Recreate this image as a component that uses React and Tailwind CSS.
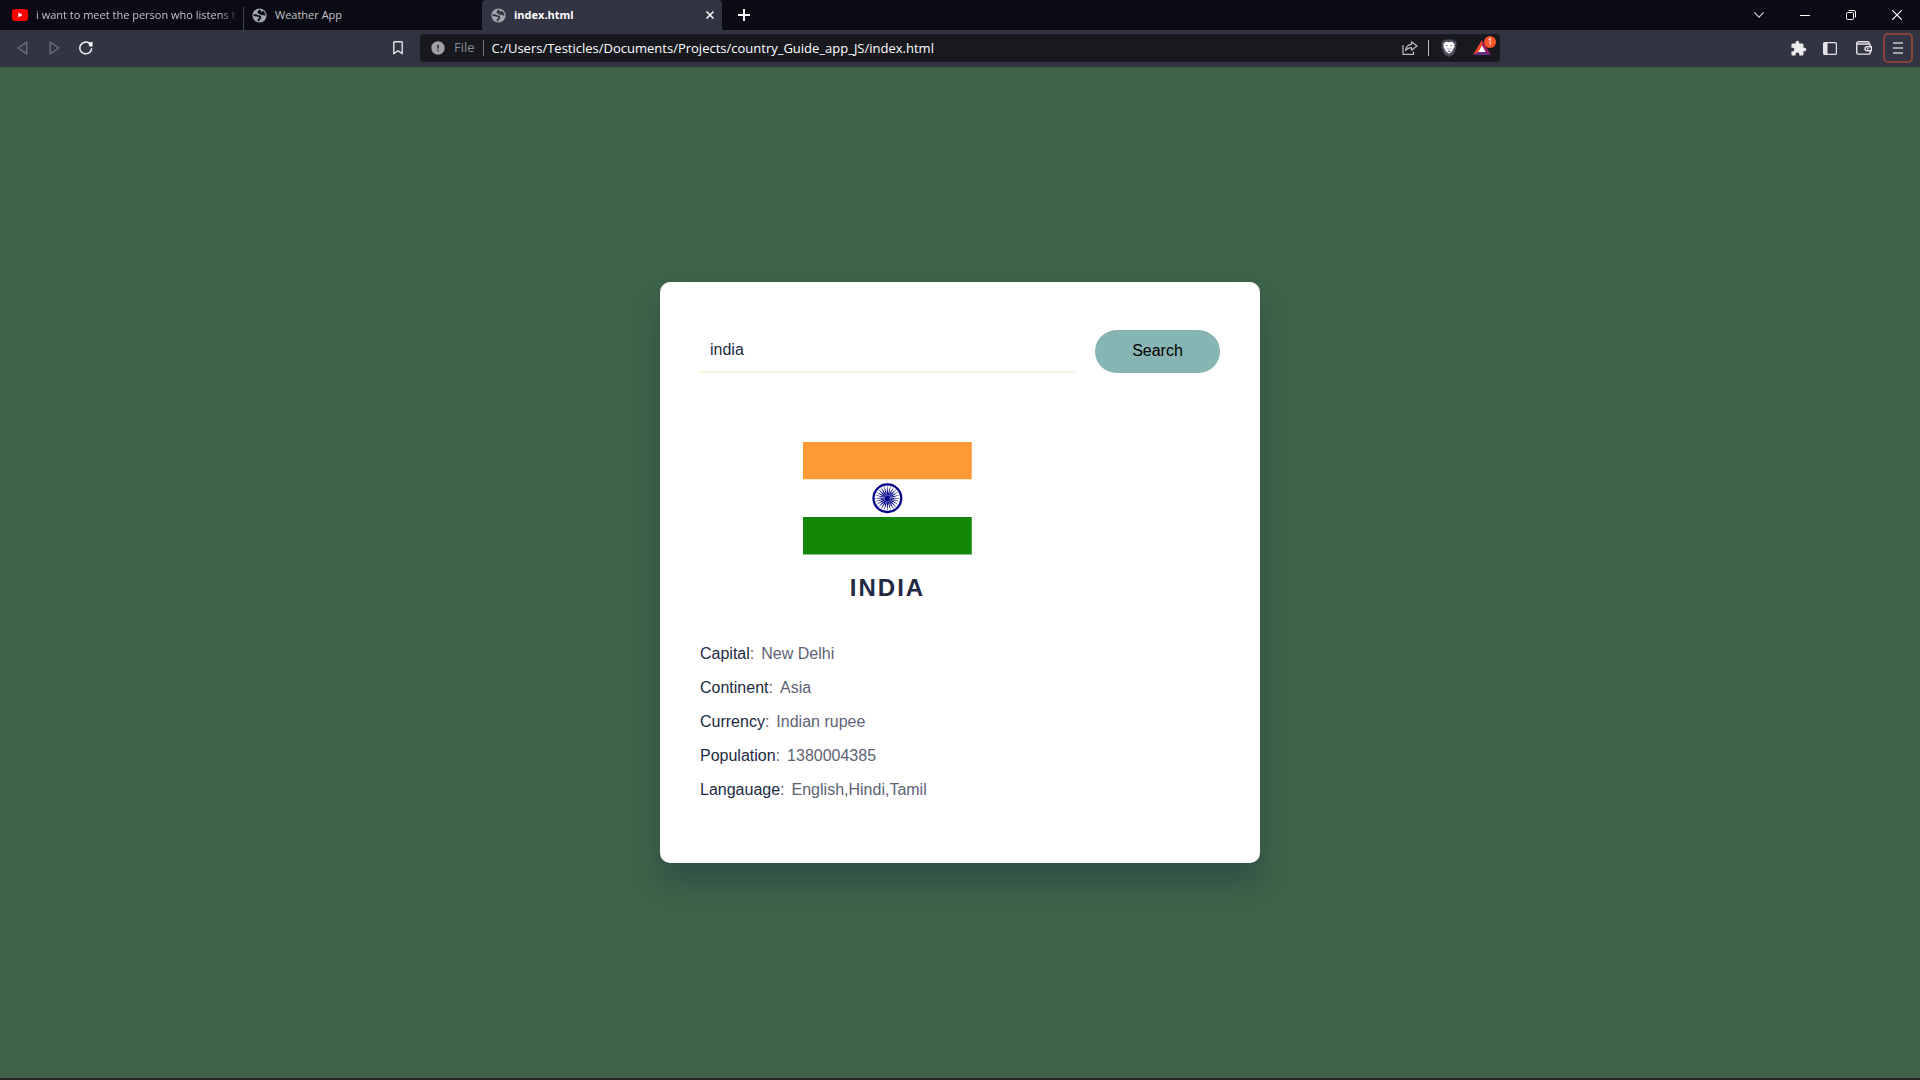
import React from "react";
import { MdError, MdExtension } from "react-icons/md";

const uiFont = "font-['Open_Sans','Noto_Sans',sans-serif]";
const pageFont = "font-['Liberation_Sans',Arial,sans-serif]";

const facts = [
  { label: "Capital", value: "New Delhi" },
  { label: "Continent", value: "Asia" },
  { label: "Currency", value: "Indian rupee" },
  { label: "Population", value: "1380004385" },
  { label: "Langauage", value: "English,Hindi,Tamil" },
];

function IconButton({ label, className = "w-8", children }) {
  return (
    <button type="button" aria-label={label} className={`flex h-full shrink-0 items-center justify-center ${className}`}>
      {children}
    </button>
  );
}

function YouTubeIcon() {
  return (
    <svg width="16" height="12" viewBox="0 0 16 12" className="shrink-0">
      <rect width="16" height="12" rx="3" fill="#ff0000" />
      <path d="M6.3 3.6v4.8L10.6 6z" fill="#fff" />
    </svg>
  );
}

function GlobeIcon({ land }) {
  return (
    <svg width="15" height="15" viewBox="0 0 15 15" className="shrink-0">
      <circle cx="7.5" cy="7.5" r="7.1" fill="#a3a6ad" />
      <path d="M8 1.7C6.300 2.400 5.400 3.900 6.100 4.900c.6.800 1.600.5 2.100 1.300.5.800 1.700.4 2.600.5.900.1 1.500.8 2.400.6A5.800 5.800 0 0 0 11 2.900L9.600 4.200 8.600 3.400z" fill={land} stroke={land} strokeWidth=".6" />
      <path d="M1.600 7.200c1.500.1 2.900-.1 4 .6 1 .6 2.600.4 2.800 1.600.2 1.100-1.300 1.300-1.700 2.200-.2.600-.1 1.100 0 1.600" fill="none" stroke={land} strokeWidth="1.8" />
    </svg>
  );
}

function TabStrip() {
  return (
    <div role="tablist" className="flex h-[30px] items-stretch bg-[#0a0b14] text-[11px] text-[#c3c5cb]">
      <button type="button" role="tab" className="flex w-[243px] min-w-0 items-center gap-2 pl-3 pr-1 text-left">
        <YouTubeIcon />
        <span className="flex-1 whitespace-nowrap [mask-image:linear-gradient(to_right,black_90%,transparent)]">
          i want to meet the person who listens t
        </span>
      </button>
      <span className="mt-[7px] w-px bg-[#45474f]" />
      <button type="button" role="tab" className="flex w-[238px] items-center gap-2 pl-2 text-left">
        <GlobeIcon land="#0a0b14" />
        <span>Weather App</span>
      </button>
      <div className="flex w-60 items-center rounded-t bg-[#323443]">
        <button type="button" role="tab" aria-selected="true" className="flex flex-1 items-center gap-2 pl-[9px] text-left font-bold text-white">
          <GlobeIcon land="#323443" />
          <span>index.html</span>
        </button>
        <IconButton label="Close tab" className="w-6">
          <svg width="8" height="8" viewBox="0 0 8 8" stroke="#fff" strokeWidth="1.5">
            <path d="M.5.5l7 7M7.5.5l-7 7" />
          </svg>
        </IconButton>
      </div>
      <IconButton label="New tab" className="w-11">
        <svg width="12" height="12" viewBox="0 0 12 12" stroke="#fff" strokeWidth="2">
          <path d="M6 0v12M0 6h12" />
        </svg>
      </IconButton>
      <div className="ml-auto flex">
        <IconButton label="Search tabs" className="w-[46px]">
          <svg width="10" height="6" viewBox="0 0 10 6" fill="none" stroke="#d6d6da" strokeWidth="1.1">
            <path d="M.4.4L5 5.2 9.6.4" />
          </svg>
        </IconButton>
        <IconButton label="Minimize" className="w-[46px]">
          <span className="h-px w-2.5 bg-white" />
        </IconButton>
        <IconButton label="Restore" className="w-[46px]">
          <svg width="10" height="10" viewBox="0 0 10 10" fill="none" stroke="#fff">
            <rect x=".5" y="2.5" width="7" height="7" rx="1" />
            <path d="M2.5.5H8A1.5 1.5 0 0 1 9.5 2v5.5" />
          </svg>
        </IconButton>
        <IconButton label="Close window" className="w-[46px]">
          <svg width="10" height="10" viewBox="0 0 10 10" stroke="#fff" strokeWidth="1.2">
            <path d="M.3.3l9.4 9.4M9.7.3L.3 9.7" />
          </svg>
        </IconButton>
      </div>
    </div>
  );
}

function ShareIcon() {
  return (
    <svg width="16" height="14" viewBox="0 0 16 14" fill="none" stroke="#b9bbc0" strokeWidth="1.2" strokeLinejoin="round">
      <path d="M1 4v9.3h10.5V10.5" />
      <path d="M9.5.8L15 5 9.5 9.2V6.7C7 6.6 5.2 7.4 3.6 9.5 4 6 6 3.6 9.5 3.3z" />
    </svg>
  );
}

function LionIcon() {
  return (
    <svg width="16" height="18" viewBox="0 0 16 18">
      <path d="M4.2.5h7.6l1.3 1.3 1.4-.1 1.2 2.5-.5 1.5.3 1.8-2 6.2c-.3 1-1 1.6-1.9 2.2L8 17.8l-3.600-1.900c-.9-.6-1.600-1.200-1.900-2.200L.5 7.500l.3-1.800-.5-1.500 1.200-2.500 1.400.1z" fill="#4e505f" />
      <path d="M5 2.7L8 3.2l3-.5 2.700 2.400-.5 1.400.2 1.900-2 2.500.2 1.100L8 14.800 4.400 12l.2-1.100-2-2.500.2-1.900-.5-1.400z" fill="#fff" />
      <path d="M4.4 6l2.300.3-.3 1zM11.600 6l-2.300.3.3 1zM7 9.700h2L8 10.700zM6 8.200l.7 1.300-.9.600zM10 8.200l-.7 1.300.9.600zM6.300 12.300L8 11.500l1.700.8L8 13z" fill="#4e505f" />
    </svg>
  );
}

function RewardsIcon() {
  return (
    <svg width="24" height="20" viewBox="0 0 24 20">
      <path d="M9 4L0 19l5.5-3L9 10z" fill="#ff4724" />
      <path d="M9 4l9 15-5.5-3L9 10z" fill="#9e1f63" />
      <path d="M0 19h18l-5.5-3h-7z" fill="#662d91" />
      <path d="M9 9.5L5.3 16h7.4z" fill="#fff" />
      <circle cx="17" cy="6" r="6" fill="#fb542b" />
      <text x="17" y="9" textAnchor="middle" fontSize="9" fill="#fff">
        1
      </text>
    </svg>
  );
}

function Toolbar() {
  return (
    <div className="flex h-[37px] items-center bg-[#323443] pb-px">
      <div className="flex h-full flex-1 items-center px-1.5">
        <IconButton label="Back">
          <svg width="11" height="14" viewBox="0 0 11 14" fill="none" stroke="#6c6e7b" strokeWidth="1.4" strokeLinejoin="round">
            <path d="M9.8 1.2v11.6L1.2 7z" />
          </svg>
        </IconButton>
        <IconButton label="Forward">
          <svg width="11" height="14" viewBox="0 0 11 14" fill="none" stroke="#6c6e7b" strokeWidth="1.4" strokeLinejoin="round">
            <path d="M1.2 1.2v11.6L9.8 7z" />
          </svg>
        </IconButton>
        <IconButton label="Reload">
          <svg width="14" height="14" viewBox="0 0 14 14">
            <path d="M12.6 7.8A5.9 5.9 0 1 1 10.3 2.2" fill="none" stroke="#f2f2f4" strokeWidth="1.5" strokeLinecap="round" />
            <path d="M9.3 1.6L13.5.8l.2 4.6-3.5.2z" fill="#f2f2f4" />
          </svg>
        </IconButton>
        <IconButton label="Bookmark this page" className="ml-auto w-8">
          <svg width="10" height="14" viewBox="0 0 10 14" fill="none" stroke="#e4e4e8" strokeWidth="1.4" strokeLinejoin="round">
            <path d="M.8 1.5a.7.7 0 0 1 .7-.7h7a.7.7 0 0 1 .7.7v11.300L5 9.800.8 12.800z" />
          </svg>
        </IconButton>
      </div>
      <div className="flex h-7 w-[56.25%] items-center rounded bg-[#17191f] pl-2.5">
        <MdError size={16} className="text-[#a0a2a8]" />
        <label htmlFor="address" className="ml-2 text-[13px] text-[#8a8c92]">
          File
        </label>
        <span className="ml-2 h-4 w-px bg-[#6f7177]" />
        <input
          id="address"
          type="text"
          defaultValue="C:/Users/Testicles/Documents/Projects/country_Guide_app_JS/index.html"
          className="h-full min-w-0 flex-1 bg-transparent pl-2 text-[13px] text-white outline-none"
        />
        <IconButton label="Share" className="w-9">
          <ShareIcon />
        </IconButton>
        <span className="h-4 w-px bg-[#b9bbc0]" />
        <IconButton label="Shields" className="w-10">
          <LionIcon />
        </IconButton>
        <IconButton label="Rewards" className="w-[31px] pb-1">
          <RewardsIcon />
        </IconButton>
      </div>
      <div className="flex h-full flex-1 items-center justify-end pl-[5px] pr-[7px]">
        <IconButton label="Extensions">
          <MdExtension size={17} className="text-[#ececef]" />
        </IconButton>
        <IconButton label="Sidebar">
          <svg width="14" height="13" viewBox="0 0 14 13">
            <rect x=".6" y=".6" width="12.8" height="11.8" rx="1" fill="none" stroke="#e4e4e8" strokeWidth="1.2" />
            <path d="M1 1h3.5v11H1z" fill="#e4e4e8" />
          </svg>
        </IconButton>
        <IconButton label="Wallet" className="w-9">
          <svg width="16" height="14" viewBox="0 0 16 14" fill="none" stroke="#e4e4e8" strokeWidth="1.4">
            <path d="M14.2 5V4a1 1 0 0 0-1-1H1.500M13 3V1.700a1 1 0 0 0-1-1H2.500A1.800 1.800 0 0 0 .7 2.500v9a1.600 1.600 0 0 0 1.600 1.600h10.900a1 1 0 0 0 1-1V10" />
            <path d="M15.300 5.800h-4.300a2 2 0 0 0 0 4h4.300zM11 7.800h1.500" />
          </svg>
        </IconButton>
        <button type="button" aria-label="Menu" className="ml-px flex size-[30px] shrink-0 items-center justify-center rounded-[5px] border-2 border-[#8b4238]">
          <svg width="10" height="12" viewBox="0 0 10 12" stroke="#c6c7cc" strokeWidth="1.6">
            <path d="M0 1h10M0 6h10M0 11h10" />
          </svg>
        </button>
      </div>
    </div>
  );
}

function IndiaFlag() {
  const spokes = Array.from({ length: 24 }, (_, i) => i * 15);
  return (
    <svg role="img" aria-label="Flag of India" viewBox="0 0 225 150" className="w-[45%]">
      <path d="M0 0h225v50H0z" fill="#ff9933" />
      <path d="M0 50h225v50H0z" fill="#fff" />
      <path d="M0 100h225v50H0z" fill="#138808" />
      <circle cx="112.5" cy="75" r="18.5" fill="none" stroke="#000088" strokeWidth="3" />
      <circle cx="112.5" cy="75" r="3.5" fill="#000088" />
      {spokes.map((angle) => (
        <path key={angle} d="M112.5 56.5l.8 11-.8 7.5-.8-7.5z" fill="#000088" transform={`rotate(${angle} 112.5 75)`} />
      ))}
    </svg>
  );
}

function CountryCard() {
  return (
    <section className="grid w-full max-w-[600px] grid-cols-[3fr_1fr] gap-x-5 rounded-[10px] bg-white px-10 py-12 text-[16px] leading-[18px] shadow-[0_20px_30px_rgba(8,21,62,0.25)]">
      <form className="contents" onSubmit={(event) => event.preventDefault()}>
        <input
          type="text"
          aria-label="Country name"
          defaultValue="india"
          className="h-[43px] min-w-0 border-b-2 border-[#f5f5dc] bg-transparent px-2.5 pb-0.5 text-[#222a43] outline-none"
        />
        <button type="submit" className="h-[43px] rounded-[22px] bg-[#87b5b3] pb-0.5 text-black">
          Search
        </button>
      </form>
      <div>
        <div className="mt-[69px] flex flex-col items-center">
          <IndiaFlag />
          <h2 className="mt-5 text-[24px] leading-[26px] font-bold tracking-[2px] text-[#222a43]">INDIA</h2>
        </div>
        <dl className="mt-11">
          {facts.map(({ label, value }) => (
            <div key={label} className="mb-4 flex gap-[7px] text-[#5d6274]">
              <dt>
                <span className="text-[#222a43]">{label}</span>:
              </dt>
              <dd>{value}</dd>
            </div>
          ))}
        </dl>
      </div>
    </section>
  );
}

export default function App() {
  return (
    <div className="flex min-h-screen flex-col border-b-2 border-[#2b2226] bg-[#3d6448]">
      <header className={uiFont}>
        <TabStrip />
        <Toolbar />
      </header>
      <main className={`flex flex-1 items-center justify-center ${pageFont}`}>
        <CountryCard />
      </main>
    </div>
  );
}
